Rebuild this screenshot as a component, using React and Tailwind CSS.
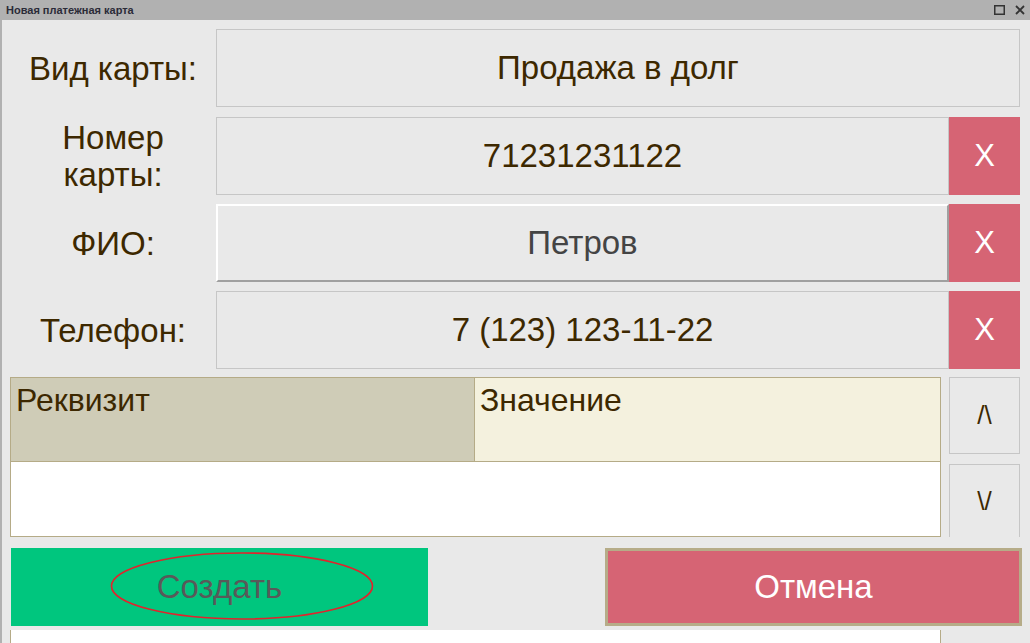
export default function App() {
  const label = "flex w-[206px] shrink-0 items-center justify-center text-center text-[33px] leading-[37px] text-[#3d2800]"
  const field = "flex items-center justify-center border border-[#c6c6c6] bg-[#e9e9e9] text-[33px] text-[#3d2800]"
  const clear = "flex w-[71px] shrink-0 items-center justify-center bg-[#d66474] text-[31px] text-white"

  return (
    <div className="flex h-[643px] w-[1030px] flex-col overflow-hidden bg-[#e9e9e9] font-['Liberation_Sans',Arial,sans-serif]">
      {/* заголовок окна */}
      <div className="flex h-[20px] shrink-0 items-center justify-between bg-[#b1b1b1] pl-[6px] pr-[5px]">
        <span className="text-[11px] font-bold text-[#2b2b38]">Новая платежная карта</span>
        <div className="flex items-center gap-[10px]">
          <svg width="11" height="10" viewBox="0 0 11 10">
            <rect x="0.75" y="0.75" width="9.5" height="8.5" fill="none" stroke="#333" strokeWidth="1.5" />
          </svg>
          <svg width="10" height="10" viewBox="0 0 10 10">
            <path d="M1 1L9 9M9 1L1 9" stroke="#333" strokeWidth="1.8" />
          </svg>
        </div>
      </div>

      <div className="flex flex-1 flex-col border-l-2 border-[#b1b1b1] pl-[8px] pt-[9px]">
        {/* Вид карты */}
        <div className="flex h-[78px]">
          <div className={label}>Вид карты:</div>
          <div className={`${field} w-[804px]`}>Продажа в долг</div>
        </div>

        {/* Номер карты */}
        <div className="mt-[10px] flex h-[78px]">
          <div className={label}>
            Номер
            <br />
            карты:
          </div>
          <div className={`${field} w-[733px]`}>71231231122</div>
          <div className={clear}>X</div>
        </div>

        {/* ФИО */}
        <div className="mt-[9px] flex h-[78px]">
          <div className={label}>ФИО:</div>
          <div className="flex w-[733px] items-center justify-center border-2 border-t-white border-l-white border-b-[#a0a0a0] border-r-[#a0a0a0] bg-[#e9e9e9] text-[33px] text-[#444]">
            Петров
          </div>
          <div className={clear}>X</div>
        </div>

        {/* Телефон */}
        <div className="mt-[9px] flex h-[78px]">
          <div className={label}>Телефон:</div>
          <div className={`${field} w-[733px]`}>7 (123) 123-11-22</div>
          <div className={clear}>X</div>
        </div>

        {/* таблица реквизитов */}
        <div className="mt-[8px] flex h-[160px]">
          <div className="flex w-[931px] flex-col border border-[#b5ab87] bg-white">
            <div className="flex h-[84px] border-b border-[#b5ab87] text-[32px] leading-[44px] text-[#3d2800]">
              <div className="w-[464px] border-r border-[#b5ab87] bg-[#cfccb7] pl-[5px]">Реквизит</div>
              <div className="flex-1 bg-[#f4f1de] pl-[5px]">Значение</div>
            </div>
            <div className="flex-1" />
          </div>
          <div className="ml-[8px] flex w-[71px] flex-col">
            <div className="flex h-[77px] items-center justify-center border border-[#c6c6c6] text-[26px] text-[#3d2800]">
              {"/\\"}
            </div>
            <div className="mt-[10px] flex flex-1 items-center justify-center border border-b-0 border-[#c6c6c6] text-[26px] text-[#3d2800]">
              {"\\/"}
            </div>
          </div>
        </div>

        {/* кнопки */}
        <div className="mt-[11px] flex h-[78px]">
          <div className="relative ml-[1px] flex w-[417px] items-center justify-center bg-[#00c67e] text-[33px] text-[#595959]">
            Создать
            <svg className="absolute left-[99px] top-[3px]" width="264" height="70" viewBox="0 0 264 70">
              <ellipse cx="132" cy="35" rx="130.5" ry="33" fill="none" stroke="#e2232c" strokeWidth="1.6" />
            </svg>
          </div>
          <div className="ml-[177px] flex w-[417px] items-center justify-center border-[3px] border-[#b6ac88] bg-[#d66474] text-[33px] text-white">
            Отмена
          </div>
        </div>

        {/* нижняя панель */}
        <div className="mt-[4px] w-[931px] flex-1 border-x border-[#b5ab87] bg-white" />
      </div>
    </div>
  )
}
